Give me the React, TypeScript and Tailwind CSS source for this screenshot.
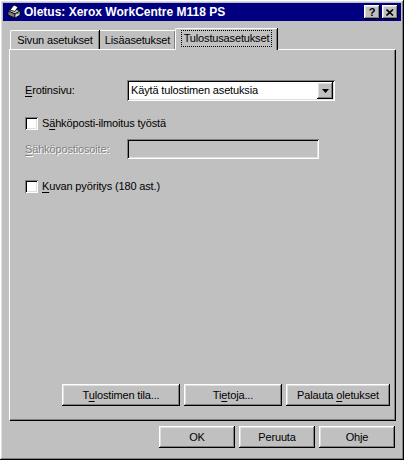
import React from "react";

const raised =
  "shadow-[inset_-1px_-1px_#000000,inset_1px_1px_#ffffff,inset_-2px_-2px_#808080,inset_2px_2px_#dfdfdf]";
const sunken =
  "shadow-[inset_1px_1px_#808080,inset_-1px_-1px_#ffffff,inset_2px_2px_#000000,inset_-2px_-2px_#dfdfdf]";

function U({ children }: { children: React.ReactNode }) {
  return <span className="underline underline-offset-[2px] decoration-1">{children}</span>;
}

function Button({ children, w }: { children: React.ReactNode; w: string }) {
  return (
    <div className={`${w} h-[22px] bg-[#c0c0c0] ${raised} flex items-center justify-center text-black`}>
      <span>{children}</span>
    </div>
  );
}

function Checkbox({ children }: { children: React.ReactNode }) {
  return (
    <div className="flex items-center h-[13px]">
      <div className={`w-[13px] h-[13px] bg-white ${sunken}`} />
      <span className="ml-[4px] text-black">{children}</span>
    </div>
  );
}

function PrinterIcon() {
  return (
    <svg width="16" height="16" viewBox="0 0 16 16">
      <path d="M3 7 L8 4 L15 7 L10 10 Z" fill="#c0c0c0" stroke="#000" strokeWidth="0.8" />
      <path d="M3 7 L10 10 L10 14 L3 11 Z" fill="#808080" stroke="#000" strokeWidth="0.8" />
      <path d="M10 10 L15 7 L15 11 L10 14 Z" fill="#dfdfdf" stroke="#000" strokeWidth="0.8" />
      <path d="M5 6 L9 1 L13 3 L10 7.5 Z" fill="#ffffff" stroke="#000" strokeWidth="0.8" />
      <rect x="11.5" y="9" width="2" height="1.2" fill="#00a000" />
    </svg>
  );
}

export default function App() {
  return (
    <div
      className={`w-[404px] h-[460px] bg-[#c0c0c0] p-[3px] flex flex-col ${raised}`}
      style={{ fontFamily: '"Liberation Sans", Arial, sans-serif' }}
    >
      {/* title bar */}
      <div className="h-[18px] bg-[#000080] flex items-center pl-[2px] pr-[3px]">
        <PrinterIcon />
        <span className="ml-[3px] text-white font-bold text-[12px]">
          Oletus: Xerox WorkCentre M118 PS
        </span>
        <div className="ml-auto flex gap-[2px]">
          <div className={`w-[16px] h-[14px] bg-[#c0c0c0] ${raised} flex items-center justify-center text-[11px] font-bold leading-none text-black`}>
            ?
          </div>
          <div className={`w-[16px] h-[14px] bg-[#c0c0c0] ${raised} flex items-center justify-center`}>
            <svg width="8" height="7" viewBox="0 0 8 7">
              <path d="M0.5 0.5 L7 6.5 M7 0.5 L0.5 6.5" stroke="#000" strokeWidth="1.6" />
            </svg>
          </div>
        </div>
      </div>

      <div className="px-[6px] mt-[7px] flex flex-col text-[11px] tracking-[-0.15px]">
        {/* tabs */}
        <div className="flex items-end h-[21px] pl-[1px] relative z-10">
          <div className="w-[89px] h-[19px] border-t border-l border-white rounded-tl-[2px] shadow-[inset_-1px_0_#808080,1px_0_#000] flex items-center justify-center text-black">
            Sivun asetukset
          </div>
          <div className="w-[75px] h-[19px] ml-[1px] border-t border-white shadow-[inset_-1px_0_#808080,1px_0_#000] flex items-center justify-center text-black">
            Lisäasetukset
          </div>
          <div className="w-[102px] h-[22px] -mb-[1px] bg-[#c0c0c0] border-t border-l border-white rounded-tl-[2px] shadow-[inset_-1px_0_#808080,1px_0_#000] flex items-start justify-center pt-[2px]">
            <span className="px-[2px] h-[15px] flex items-center outline outline-1 outline-dotted outline-black text-black">
              Tulostusasetukset
            </span>
          </div>
        </div>

        {/* panel */}
        <div className="h-[371px] border-t border-l border-white shadow-[inset_-1px_-1px_#808080,1px_1px_#000] flex flex-col pl-[15px] pr-[5px] pb-[14px]">
          <div className="flex items-center h-[21px] mt-[30px]">
            <span className="w-[102px] text-black">
              <U>E</U>rotinsivu:
            </span>
            <div className={`w-[208px] h-[21px] bg-white ${sunken} flex items-center pl-[4px] pr-[2px]`}>
              <span className="text-black">Käytä tulostimen asetuksia</span>
              <div className={`ml-auto w-[16px] h-[17px] bg-[#c0c0c0] ${raised} flex items-center justify-center`}>
                <svg width="7" height="4" viewBox="0 0 7 4">
                  <path d="M0 0 H7 L3.5 4 Z" fill="#000" />
                </svg>
              </div>
            </div>
          </div>

          <div className="mt-[16px]">
            <Checkbox>
              S<U>ä</U>hköposti-ilmoitus työstä
            </Checkbox>
          </div>

          <div className="flex items-center h-[20px] mt-[9px]">
            <span className="w-[102px] text-[#808080] [text-shadow:1px_1px_#ffffff]">
              <U>S</U>ähköpostiosoite:
            </span>
            <div className={`w-[192px] h-[20px] bg-[#c0c0c0] ${sunken}`} />
          </div>

          <div className="mt-[21px]">
            <Checkbox>
              <U>K</U>uvan pyöritys (180 ast.)
            </Checkbox>
          </div>

          <div className="mt-auto flex justify-end gap-[4px]">
            <Button w="w-[118px]">
              T<U>u</U>lostimen tila...
            </Button>
            <Button w="w-[98px]">
              Ti<U>e</U>toja...
            </Button>
            <Button w="w-[104px]">
              Palauta <U>o</U>letukset
            </Button>
          </div>
        </div>

        {/* dialog buttons */}
        <div className="mt-[6px] flex justify-end gap-[4px]">
          <Button w="w-[76px]">OK</Button>
          <Button w="w-[76px]">Peruuta</Button>
          <Button w="w-[76px]">Ohje</Button>
        </div>
      </div>
    </div>
  );
}
